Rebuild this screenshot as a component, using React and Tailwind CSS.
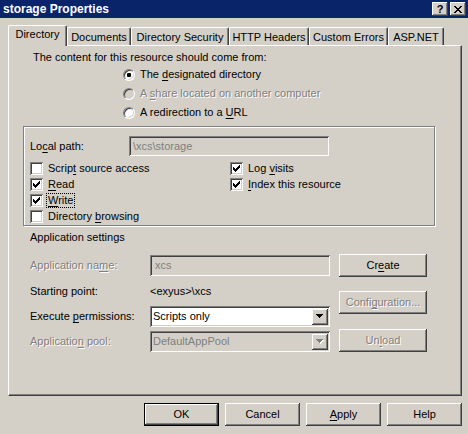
import React from 'react';

const face = 'bg-[#d4d0c8]';
const raised = 'shadow-[inset_-1px_-1px_0_#404040,inset_1px_1px_0_#fff,inset_-2px_-2px_0_#808080]';
const sunken = 'shadow-[inset_1px_1px_0_#808080,inset_-1px_-1px_0_#fff,inset_2px_2px_0_#404040,inset_-2px_-2px_0_#d4d0c8]';
const dim = 'text-[#808080] [text-shadow:1px_1px_0_#fff]';

const K = ({ children }) => <span className="underline underline-offset-[2px]">{children}</span>;

function Check() {
  return (
    <svg width="7" height="7" viewBox="0 0 7 7" shapeRendering="crispEdges">
      <path
        d="M6 0h1v1h-1z M5 1h2v1h-2z M0 2h1v1h-1z M4 2h3v1h-3z M0 3h2v1h-2z M3 3h3v1h-3z M0 4h5v1h-5z M1 5h3v1h-3z M2 6h1v1h-1z"
        fill="#000"
      />
    </svg>
  );
}

function Checkbox({ checked, children }) {
  return (
    <div className="flex items-center h-[16px] gap-[5px]">
      <span className={`w-[13px] h-[13px] shrink-0 bg-white flex items-center justify-center ${sunken}`}>
        {checked && <Check />}
      </span>
      <span className="whitespace-pre">{children}</span>
    </div>
  );
}

function Radio({ checked, disabled, children }) {
  return (
    <div className="flex items-center h-[19px] gap-[5px]">
      <span
        className={`w-[12px] h-[12px] rounded-full border border-t-[#808080] border-l-[#808080] border-b-white border-r-white flex items-center justify-center shadow-[inset_1px_1px_0_#404040,inset_-1px_-1px_0_#d4d0c8] ${
          disabled ? 'bg-[#d4d0c8]' : 'bg-white'
        }`}
      >
        {checked && <span className="w-[4px] h-[4px] rounded-[1px] bg-black" />}
      </span>
      <span className={disabled ? dim : ''}>{children}</span>
    </div>
  );
}

function Button({ children, disabled, isDefault, className = '' }) {
  return (
    <div
      className={`h-[23px] flex items-center justify-center ${face} ${raised} ${
        isDefault ? 'border border-black' : ''
      } ${disabled ? dim : ''} ${className}`}
    >
      <span>{children}</span>
    </div>
  );
}

function Arrow({ disabled }) {
  return (
    <div className={`w-[16px] h-[16px] flex items-center justify-center ${face} ${raised}`}>
      <svg width="8" height="5" viewBox="0 0 8 5" shapeRendering="crispEdges">
        {disabled && <path d="M1 1h7v1h-7z M2 2h5v1h-5z M3 3h3v1h-3z M4 4h1v1h-1z" fill="#fff" />}
        <path d="M0 0h7v1h-7z M1 1h5v1h-5z M2 2h3v1h-3z M3 3h1v1h-1z" fill={disabled ? '#808080' : '#000'} />
      </svg>
    </div>
  );
}

function Select({ value, disabled }) {
  return (
    <div
      className={`w-[180px] h-[21px] p-[2px] flex items-center ${sunken} ${disabled ? face : 'bg-white'}`}
    >
      <span className={`flex-1 pl-px ${disabled ? 'text-[#808080]' : ''}`}>{value}</span>
      <Arrow disabled={disabled} />
    </div>
  );
}

const tabs = [
  { label: 'Documents', w: 'w-[64px]' },
  { label: 'Directory Security', w: 'w-[98px]' },
  { label: 'HTTP Headers', w: 'w-[80px]' },
  { label: 'Custom Errors', w: 'w-[79px]' },
  { label: 'ASP.NET', w: 'w-[56px]' },
];

export default function App() {
  return (
    <div className={`w-[468px] h-[434px] overflow-hidden ${face} text-[11px] leading-none text-black font-['Liberation_Sans',Arial,sans-serif]`}>
      {/* Title bar */}
      <div className="h-[18px] bg-[#0a246a] flex items-center justify-between pl-[3px] pr-[2px]">
        <span className="text-white font-bold text-[12px]">storage Properties</span>
        <div className="flex gap-[2px]">
          <div className={`w-[16px] h-[14px] flex items-center justify-center font-bold text-[11px] ${face} ${raised}`}>?</div>
          <div className={`w-[16px] h-[14px] flex items-center justify-center ${face} ${raised}`}>
            <svg width="8" height="7" viewBox="0 0 8 7" shapeRendering="crispEdges">
              <path
                d="M0 0h2v1h-2z M6 0h2v1h-2z M1 1h2v1h-2z M5 1h2v1h-2z M2 2h4v1h-4z M3 3h2v1h-2z M2 4h4v1h-4z M1 5h2v1h-2z M5 5h2v1h-2z M0 6h2v1h-2z M6 6h2v1h-2z"
                fill="#000"
              />
            </svg>
          </div>
        </div>
      </div>

      <div className="px-[8px] pt-[7px]">
        {/* Tabs */}
        <div className="flex items-end h-[20px]">
          <div className={`relative z-10 -mb-px w-[59px] h-[21px] pb-[4px] flex items-center justify-center border-t border-l border-r border-white border-r-[#404040] rounded-t-[2px] shadow-[inset_-1px_0_0_#808080] ${face}`}>
            Directory
          </div>
          {tabs.map((t) => (
            <div
              key={t.label}
              className={`${t.w} h-[18px] pt-px flex items-center justify-center border-t border-l border-r border-white border-r-[#404040] rounded-t-[2px] shadow-[inset_-1px_0_0_#808080]`}
            >
              {t.label}
            </div>
          ))}
        </div>

        {/* Panel */}
        <div className="w-[454px] h-[351px] border border-t-white border-l-white border-r-[#404040] border-b-[#404040] shadow-[inset_-1px_-1px_0_#808080] flex flex-col">
          <div className="h-[16px] mt-[3px] pl-[24px] flex items-center">The content for this resource should come from:</div>

          <div className="pl-[114px] flex flex-col">
            <Radio checked>
              The <K>d</K>esignated directory
            </Radio>
            <Radio disabled>
              A <K>s</K>hare located on another computer
            </Radio>
            <Radio>
              A redirection to a <K>U</K>RL
            </Radio>
          </div>

          {/* Local path group */}
          <div className="ml-[14px] mt-[4px] w-[412px] h-[100px] border border-[#808080] shadow-[inset_1px_1px_0_#fff,1px_1px_0_#fff] pl-[6px]">
            <div className="mt-[9px] h-[20px] flex items-center">
              <span className="w-[99px]">
                Lo<K>c</K>al path:
              </span>
              <div className={`w-[200px] h-[20px] px-[4px] flex items-center text-[#808080] ${sunken}`}>\xcs\storage</div>
            </div>
            <div className="mt-[4px] flex">
              <div className="w-[200px] flex flex-col">
                <Checkbox>
                  Scrip<K>t</K> source access
                </Checkbox>
                <Checkbox checked>
                  <K>R</K>ead
                </Checkbox>
                <Checkbox checked>
                  <span className="inline-block h-[15px] leading-[13px] px-px border border-dotted border-black -ml-[2px]">
                    <K>W</K>rite
                  </span>
                </Checkbox>
                <Checkbox>
                  Directory <K>b</K>rowsing
                </Checkbox>
              </div>
              <div className="flex flex-col">
                <Checkbox checked>
                  Log <K>v</K>isits
                </Checkbox>
                <Checkbox checked>
                  <K>I</K>ndex this resource
                </Checkbox>
              </div>
            </div>
          </div>

          <div className="mt-[3px] h-[16px] pl-[21px] flex items-center">Application settings</div>

          {/* Application settings */}
          <div className="pl-[21px] flex">
            <div className="w-[309px] flex flex-col">
              <div className="mt-[10px] h-[21px] flex items-center">
                <span className={`w-[120px] ${dim}`}>
                  Application na<K>m</K>e:
                </span>
                <div className={`w-[180px] h-[21px] px-[5px] flex items-center text-[#808080] ${sunken}`}>xcs</div>
              </div>
              <div className="mt-[7px] h-[16px] flex items-center">
                <span className="w-[120px]">Starting point:</span>
                <span>&lt;exyus&gt;\xcs</span>
              </div>
              <div className="mt-[7px] h-[21px] flex items-center">
                <span className="w-[120px]">
                  Execute <K>p</K>ermissions:
                </span>
                <Select value="Scripts only" />
              </div>
              <div className="mt-[4px] h-[21px] flex items-center">
                <span className={`w-[120px] ${dim}`}>
                  Applicatio<K>n</K> pool:
                </span>
                <Select value="DefaultAppPool" disabled />
              </div>
            </div>
            <div className="w-[88px] flex flex-col">
              <Button className="mt-[9px]">
                Cr<K>e</K>ate
              </Button>
              <Button className="mt-[14px]" disabled>
                Confi<K>g</K>uration...
              </Button>
              <Button className="mt-[15px]" disabled>
                Un<K>l</K>oad
              </Button>
            </div>
          </div>
        </div>

        {/* Dialog buttons */}
        <div className="mt-[7px] flex justify-end gap-[6px] w-[454px]">
          <Button isDefault className="w-[75px]">OK</Button>
          <Button className="w-[75px]">Cancel</Button>
          <Button className="w-[75px]">
            <K>A</K>pply
          </Button>
          <Button className="w-[75px]">Help</Button>
        </div>
      </div>
    </div>
  );
}
